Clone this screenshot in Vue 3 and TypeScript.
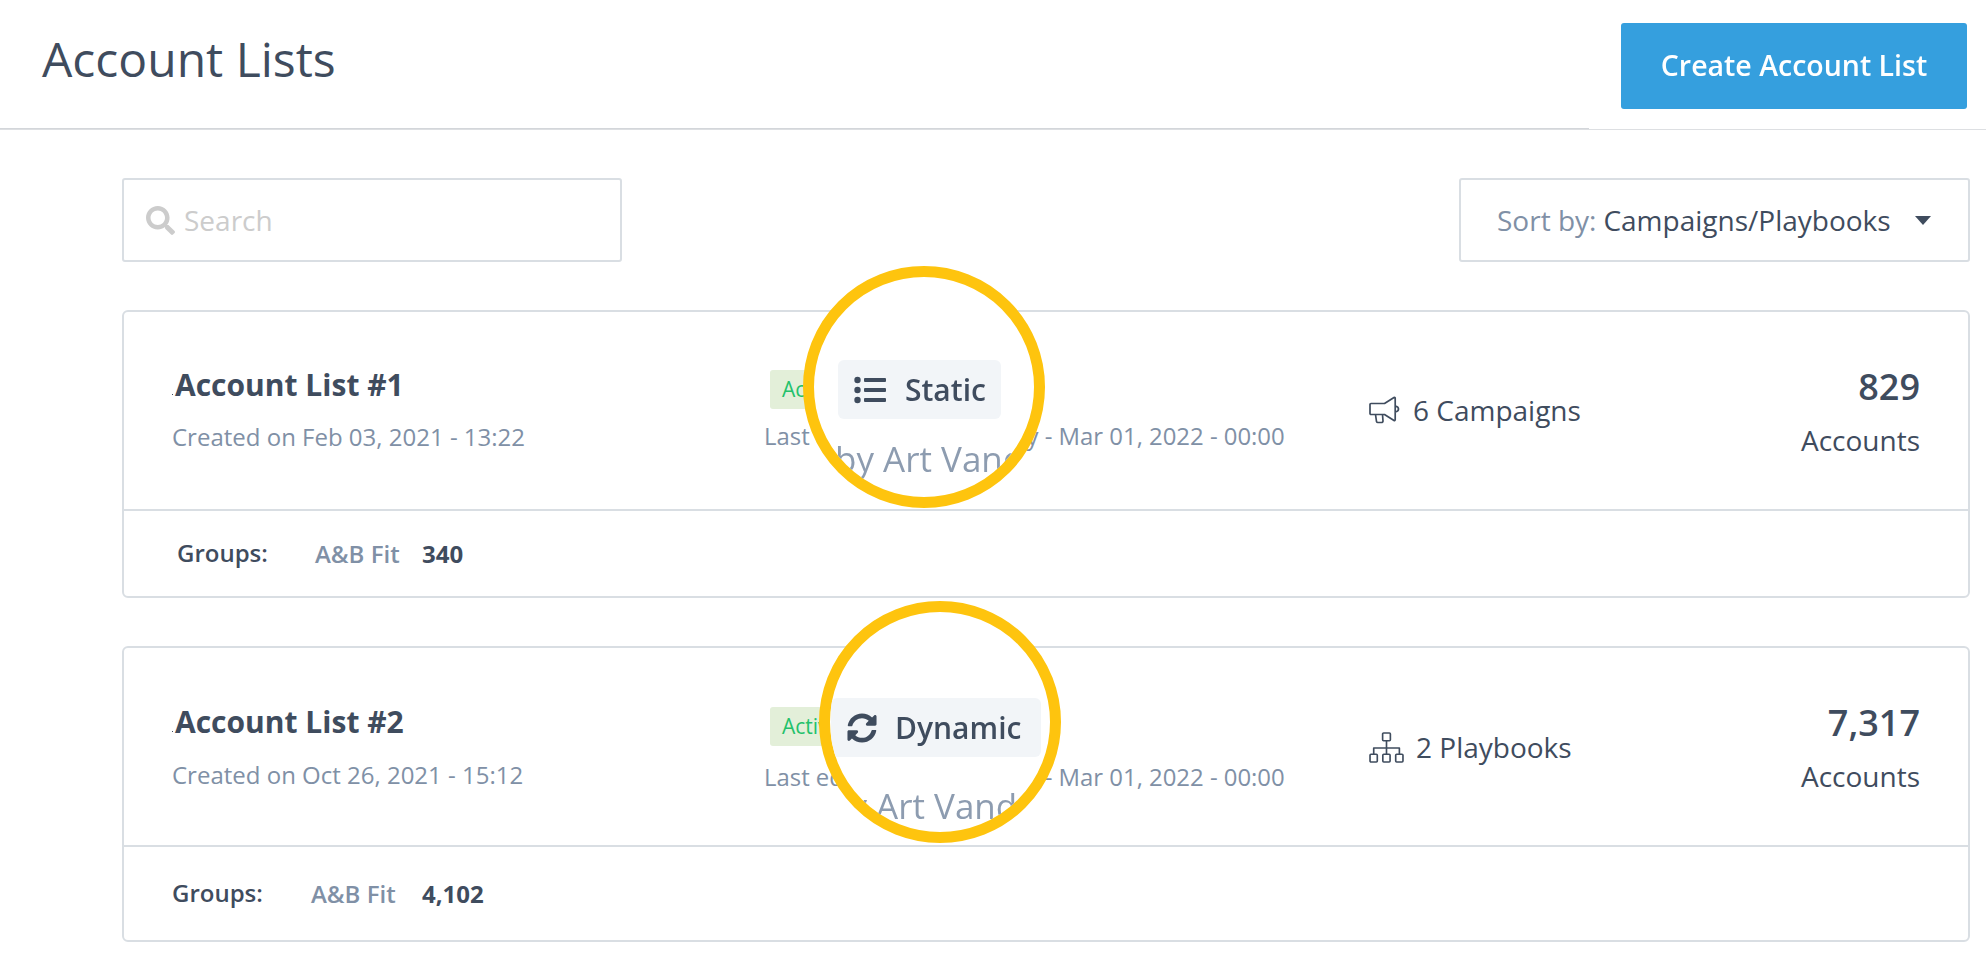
<script setup lang="ts">
interface Group { name: string; count: string }
interface AccountList {
  id: number
  title: string
  created: string
  status: string
  kind: string
  usage: string
  usageIcon: 'bullhorn' | 'sitemap'
  accounts: string
  group: Group
}

const lists: AccountList[] = [
  {
    id: 1,
    title: 'Account List #1',
    created: 'Created on Feb 03, 2021 - 13:22',
    status: 'Active',
    kind: 'Static',
    usage: '6 Campaigns',
    usageIcon: 'bullhorn',
    accounts: '829',
    group: { name: 'A&B Fit', count: '340' }
  },
  {
    id: 2,
    title: 'Account List #2',
    created: 'Created on Oct 26, 2021 - 15:12',
    status: 'Active',
    kind: 'Dynamic',
    usage: '2 Playbooks',
    usageIcon: 'sitemap',
    accounts: '7,317',
    group: { name: 'A&B Fit', count: '4,102' }
  }
]
</script>

<template>
  <div class="page">
    <header class="header">
      <h1 class="heading">Account Lists</h1>
      <button class="create" type="button"><span class="create-label">Create Account List</span></button>
    </header>

    <main class="content">
      <div class="toolbar">
        <label class="search">
          <svg class="search-icon" viewBox="0 0 512 512" aria-hidden="true">
            <path d="M505 442.7L405.3 343c-4.5-4.5-10.6-7-17-7H372c27.6-35.3 44-79.7 44-128C416 93.1 322.9 0 208 0S0 93.1 0 208s93.1 208 208 208c48.3 0 92.7-16.4 128-44v16.3c0 6.4 2.5 12.5 7 17l99.7 99.7c9.4 9.4 24.6 9.4 33.9 0l28.3-28.3c9.4-9.4 9.4-24.6.1-34zM208 336c-70.7 0-128-57.2-128-128 0-70.7 57.2-128 128-128 70.7 0 128 57.2 128 128 0 70.7-57.2 128-128 128z" />
          </svg>
          <span class="placeholder">Search</span>
        </label>
        <div class="sort">
          <span class="sort-label">Sort by:</span>
          <span class="sort-value">Campaigns/Playbooks</span>
          <span class="caret"></span>
        </div>
      </div>

      <article v-for="list in lists" :key="list.id" class="card" :class="`card-${list.id}`">
        <div class="card-top">
          <div class="col-name">
            <div class="title"><i class="speck"></i>{{ list.title }}</div>
            <div class="created">{{ list.created }}</div>
          </div>
          <div class="col-state">
            <span class="badge">{{ list.status }}</span>
            <div class="edited">Last edit by Art Vandelay - Mar 01, 2022 - 00:00</div>
          </div>
          <div class="col-usage">
            <svg v-if="list.usageIcon === 'bullhorn'" class="usage-icon bullhorn" viewBox="0 0 31 28" aria-hidden="true">
              <path d="M1 8.500a1 1 0 0 1 1-1h13.500L25 1.500a.8.8 0 0 1 1.200.7v21.600a.8.8 0 0 1-1.200.7l-9.500-6H2a1 1 0 0 1-1-1zM26.200 10c2 .3 3.300 1.500 3.300 3s-1.300 2.700-3.300 3M6.500 18.500l1 7a1.500 1.500 0 0 0 1.500 1h3.500a1.500 1.500 0 0 0 1.500-1.500l-.5-6.500" />
            </svg>
            <svg v-else class="usage-icon sitemap" viewBox="0 0 36 32" aria-hidden="true">
              <rect x="14" y="1" width="8" height="8" rx="1" />
              <rect x="1" y="23" width="7.500" height="8" rx="1" />
              <rect x="14.200" y="23" width="7.500" height="8" rx="1" />
              <rect x="27.500" y="23" width="7.500" height="8" rx="1" />
              <path d="M18 9v14M4.800 23v-6.500h26.500v6.500" />
            </svg>
            <span>{{ list.usage }}</span>
          </div>
          <div class="col-count">
            <div class="count">{{ list.accounts }}</div>
            <div class="count-label">Accounts</div>
          </div>
        </div>
        <div class="card-bottom">
          <span class="groups-label">Groups:</span>
          <span class="group-name">{{ list.group.name }}</span>
          <span class="group-count">{{ list.group.count }}</span>
        </div>

        <div class="ring">
          <div class="chip">
            <svg v-if="list.kind === 'Static'" class="chip-icon" viewBox="0 0 32 28" aria-hidden="true">
              <circle cx="3.500" cy="4" r="3.200" />
              <circle cx="3.500" cy="14" r="3.200" />
              <circle cx="3.500" cy="24" r="3.200" />
              <rect x="10" y="2" width="22" height="4" rx="1" />
              <rect x="10" y="12" width="22" height="4" rx="1" />
              <rect x="10" y="22" width="22" height="4" rx="1" />
            </svg>
            <svg v-else class="chip-icon" viewBox="0 0 512 512" aria-hidden="true">
              <path d="M370.72 133.28C339.458 104.008 298.888 87.962 255.848 88c-77.458.068-144.328 53.178-162.791 126.85-1.344 5.363-6.122 9.15-11.651 9.15H24.103c-7.498 0-13.194-6.807-11.807-14.176C33.933 94.924 134.813 8 256 8c66.448 0 126.791 26.136 171.315 68.685L463.03 40.97C478.149 25.851 504 36.559 504 57.941V192c0 13.255-10.745 24-24 24H345.941c-21.382 0-32.09-25.851-16.971-40.971l41.75-41.749zM32 296h134.059c21.382 0 32.09 25.851 16.971 40.971l-41.75 41.75c31.262 29.273 71.835 45.319 114.876 45.28 77.418-.07 144.315-53.144 162.787-126.849 1.344-5.363 6.122-9.15 11.651-9.15h57.304c7.498 0 13.194 6.807 11.807 14.176C478.067 417.076 377.187 504 256 504c-66.448 0-126.791-26.136-171.315-68.685L48.97 471.03C33.851 486.149 8 475.441 8 454.059V320c0-13.255 10.745-24 24-24z" />
            </svg>
            <span>{{ list.kind }}</span>
          </div>
          <div class="ring-text">by Art Vandelay</div>
        </div>
      </article>
    </main>
  </div>
</template>

<style scoped>
.page {
  width: 1986px;
  height: 978px;
  overflow: hidden;
  background: #fff;
  font-family: "Open Sans", "Noto Sans", sans-serif;
  color: #3f4c5e;
}

.header {
  position: relative;
  box-sizing: border-box;
  height: 130px;
  padding: 23px 19px 0 42px;
  display: flex;
  justify-content: space-between;
  align-items: flex-start;
  border-bottom: 1px solid #dddfe2;
}
.header::after {
  content: "";
  position: absolute;
  left: 0;
  bottom: 0;
  width: 1589px;
  height: 1px;
  background: #d3d6da;
}
.heading {
  margin: 8px 0 0;
  font-size: 48px;
  line-height: 56px;
  font-weight: 400;
  color: #3f4c5e;
}
.create {
  width: 346px;
  height: 86px;
  border: 0;
  border-radius: 3px;
  background: #359fde;
  color: #fff;
  font-family: inherit;
  font-size: 28.500px;
  font-weight: 600;
  padding: 0 0 2px;
}
.create-label {
  display: inline-block;
  filter: blur(0.6px);
}

.content {
  padding: 48px 16px 0 122px;
}
.toolbar {
  display: flex;
  justify-content: space-between;
  margin-bottom: 48px;
}
.search,
.sort {
  box-sizing: border-box;
  height: 84px;
  border: 2px solid #d9dee3;
  border-radius: 3px;
  display: flex;
  align-items: center;
  font-size: 28px;
}
.search {
  width: 500px;
  padding-left: 22px;
}
.search-icon {
  width: 29px;
  height: 29px;
  fill: #cccccc;
  margin-right: 9px;
}
.placeholder {
  color: #cccccc;
}
.sort {
  width: 511px;
  padding-left: 36px;
}
.sort-label {
  color: #8090a6;
}
.sort-value {
  margin-left: 7px;
  color: #3f4c5e;
}
.caret {
  width: 0;
  height: 0;
  margin-left: 24px;
  border-left: 8px solid transparent;
  border-right: 8px solid transparent;
  border-top: 9px solid #3f4c5e;
}

.card {
  position: relative;
  box-sizing: border-box;
  border: 2px solid #d9dee3;
  border-radius: 6px;
}
.card-1 {
  height: 288px;
  margin-bottom: 48px;
}
.card-2 {
  height: 296px;
}
.card-top {
  box-sizing: border-box;
  height: 199px;
  display: flex;
  border-bottom: 2px solid #d9dee3;
  padding: 0 48px 0 48px;
}

.col-name {
  width: 592px;
  padding-top: 55px;
}
.card-2 .col-name {
  padding-top: 56px;
}
.title {
  position: relative;
  padding-left: 3px;
  font-size: 30px;
  line-height: 36px;
  font-weight: 700;
  color: #3f4c5e;
}
.speck {
  position: absolute;
  left: 0;
  bottom: 8px;
  width: 1px;
  height: 1px;
  background: #3f4c5e;
}
.created {
  margin-top: 19px;
  font-size: 24px;
  line-height: 30px;
  color: #8090a6;
}
.card-2 .created {
  margin-top: 20px;
}

.col-state {
  width: 605px;
  padding-top: 58px;
}
.card-2 .col-state {
  padding-top: 59px;
}
.badge {
  display: block;
  box-sizing: border-box;
  width: fit-content;
  height: 39px;
  margin-left: 6px;
  padding: 0 12px;
  border-radius: 3px;
  background: #e3efd9;
  color: #23c16b;
  font-size: 21px;
  line-height: 39px;
}
.edited {
  margin-top: 12px;
  font-size: 23.900px;
  line-height: 30px;
  color: #8090a6;
  white-space: nowrap;
}
.card-2 .edited {
  margin-top: 16px;
}

.col-usage {
  flex: 1;
  display: flex;
  align-items: center;
  align-self: flex-start;
  height: 36px;
  margin-top: 80px;
  font-size: 28px;
  color: #3f4c5e;
}
.card-2 .col-usage {
  margin-top: 81px;
}
.usage-icon {
  fill: none;
  stroke: #3f4c5e;
  stroke-width: 1.7;
  stroke-linejoin: round;
  flex: none;
}
.bullhorn {
  width: 31px;
  height: 28px;
  margin-right: 13px;
}
.sitemap {
  width: 35px;
  height: 31px;
  margin-right: 12px;
}

.col-count {
  text-align: right;
  padding-top: 55px;
}
.count {
  font-size: 36px;
  line-height: 40px;
  font-weight: 600;
  color: #3f4c5e;
}
.count-label {
  margin-top: 17px;
  font-size: 28px;
  line-height: 32px;
  color: #3f4c5e;
}

.card-bottom {
  display: flex;
  align-items: center;
  height: 85px;
  padding-left: 53px;
}
.card-2 .card-bottom {
  height: 93px;
  padding-left: 48px;
}
.groups-label {
  width: 138px;
  font-size: 24px;
  font-weight: 600;
  margin-top: -3px;
  color: #3f4c5e;
}
.card-2 .groups-label {
  width: 139px;
  margin-top: -2px;
}
.group-name {
  width: 107px;
  font-size: 24px;
  font-weight: 600;
  color: #8090a6;
}
.card-2 .group-name {
  width: 111px;
}
.group-count {
  font-size: 24px;
  font-weight: 700;
  color: #3f4c5e;
}

.ring {
  position: absolute;
  box-sizing: border-box;
  width: 242px;
  height: 242px;
  border: 11px solid #fec40e;
  border-radius: 50%;
  background: #fff;
  overflow: hidden;
}
.card-1 .ring {
  left: 679px;
  top: -46px;
  padding: 83px 0 0 24px;
}
.card-2 .ring {
  left: 695px;
  top: -47px;
  padding: 86px 0 0 1px;
}
.chip {
  display: flex;
  align-items: center;
  box-sizing: border-box;
  width: fit-content;
  height: 59px;
  padding: 0 15px 0 16px;
  border-radius: 6px;
  background: #f2f5f8;
  font-size: 30px;
  font-weight: 600;
  color: #3f4c5e;
  white-space: nowrap;
  filter: blur(0.5px);
}
.card-2 .chip {
  padding-right: 20px;
}
.chip-icon {
  width: 32px;
  height: 28px;
  fill: #3f4c5e;
  margin-right: 19px;
  flex: none;
}
.card-2 .chip-icon {
  width: 30px;
  height: 30px;
  margin-right: 18px;
}
.ring-text {
  margin: 20px 0 0 -3px;
  font-size: 35px;
  line-height: 40px;
  color: #8d9cb0;
  white-space: nowrap;
  filter: blur(0.6px);
}
.card-2 .ring-text {
  margin-top: 29px;
}
</style>
